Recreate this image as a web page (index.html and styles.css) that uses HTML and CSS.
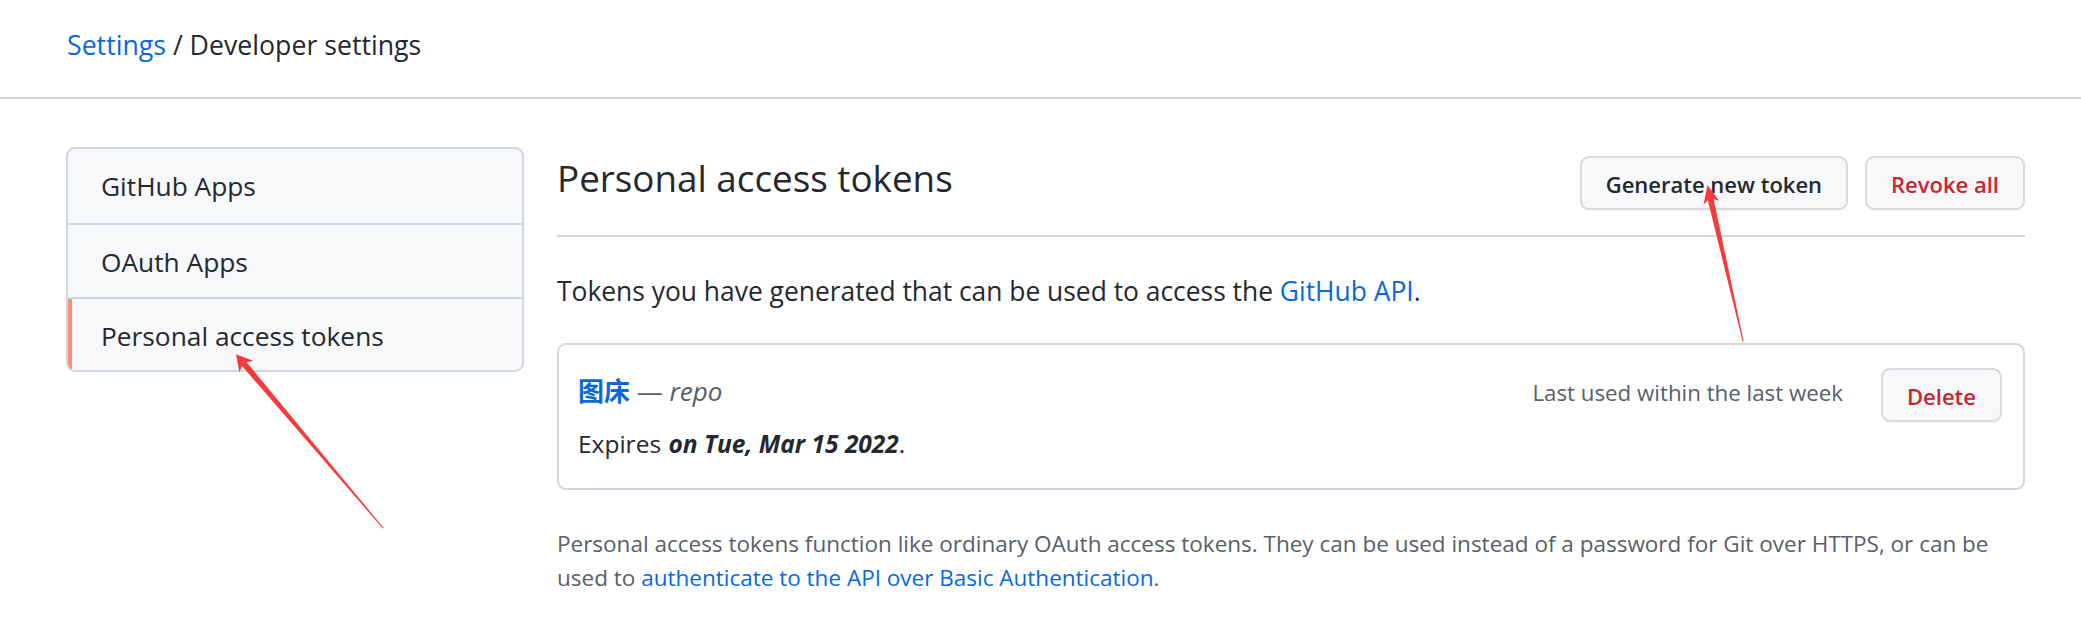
FILE: index.html
```html
<!DOCTYPE html>
<html lang="en">
<head>
<meta charset="utf-8">
<title>Personal access tokens</title>
<link rel="stylesheet" href="styles.css">
</head>
<body>
<header class="header">
  <a class="crumb-link" href="#">Settings</a> / Developer settings
</header>
<div class="layout">
  <nav class="sidebar">
    <a class="side-item" href="#">GitHub Apps</a>
    <a class="side-item" href="#">OAuth Apps</a>
    <a class="side-item active" href="#">Personal access tokens</a>
  </nav>
  <main class="main">
    <div class="subhead">
      <h2 class="title">Personal access tokens</h2>
      <div class="actions">
        <button class="btn">Generate new token</button>
        <button class="btn danger">Revoke all</button>
      </div>
    </div>
    <p class="intro">Tokens you have generated that can be used to access the <a class="link" href="#">GitHub API</a>.</p>
    <div class="token">
      <div class="token-row">
        <div class="token-name"><a class="token-link" href="#">图床</a> <span class="muted">— <em>repo</em></span></div>
        <span class="last-used">Last used within the last week</span>
        <button class="btn danger">Delete</button>
      </div>
      <p class="expires">Expires <strong class="date"><em>on Tue, Mar 15 2022</em></strong>.</p>
    </div>
    <p class="note">Personal access tokens function like ordinary OAuth access tokens. They can be used instead of a password for Git over HTTPS, or can be used to <a class="link" href="#">authenticate to the API over Basic Authentication</a>.</p>
  </main>
</div>
<svg class="arrows" width="2081" height="625" viewBox="0 0 2081 625">
  <polygon fill="#f53b3b" points="236,354.3 253.2,360.7 246.7,362.3 383.7,528 382.9,528.6 242.1,366.1 239.4,372.3"/>
  <polygon fill="#f53b3b" points="1707.4,185 1719.2,200.8 1713.6,198.9 1743.7,341.6 1742.7,341.8 1707.8,200.3 1703.6,204.4"/>
</svg>
</body>
</html>
```

FILE: styles.css
```css
* { box-sizing: border-box; }
html, body { margin: 0; padding: 0; background: #fff; }
body {
  font-family: "Open Sans", "Noto Sans CJK SC", sans-serif;
  color: #24292f;
  width: 2081px;
  height: 625px;
  overflow: hidden;
  position: relative;
}
.header {
  height: 99px;
  padding: 27px 0 0 67px;
  border-bottom: 2px solid #d0d7de;
  font-size: 26.7px;
  line-height: 36px;
}
.crumb-link { color: #0969da; text-decoration: none; }
.layout {
  display: flex;
  gap: 33px;
  padding: 48px 56px 0 66px;
}
.sidebar {
  width: 458px;
  flex: none;
  align-self: flex-start;
  border: 2px solid #d0d7de;
  border-radius: 9px;
  background: #f6f8fa;
  overflow: hidden;
}
.side-item {
  display: block;
  height: 74px;
  padding-top: 1px;
  line-height: 73px;
  padding-left: 33px;
  font-size: 26.3px;
  color: #24292f;
  text-decoration: none;
}
.side-item + .side-item { border-top: 2px solid #d0d7de; }
.side-item.active { height: 73px; box-shadow: inset 4px 0 0 #fd8c73; }
.main { flex: 1; min-width: 0; }
.subhead {
  display: flex;
  align-items: flex-start;
  padding-top: 9px;
  padding-bottom: 25px;
  border-bottom: 2px solid #d0d7de;
}
.title {
  flex: 1;
  margin: 0;
  font-size: 36.8px;
  font-weight: 400;
  line-height: 45px;
}
.actions { display: flex; gap: 17px; }
.btn {
  height: 54px;
  padding: 2px 24px 0;
  line-height: 48px;
  font-family: inherit;
  font-size: 22px;
  font-weight: 600;
  border: 2px solid #d8dadd;
  border-radius: 9px;
  background: #f6f8fa;
  color: #24292f;
  box-shadow: 0 1px 0 rgba(31, 35, 40, 0.04);
}
.btn.danger { color: #cf222e; }
.intro {
  margin: 36px 0 0;
  font-size: 26.4px;
  line-height: 36px;
}
.link { color: #0969da; text-decoration: none; }
.token {
  margin-top: 34px;
  border: 2px solid #d0d7de;
  border-radius: 9px;
  padding: 23px 21px 27px 19px;
}
.token-row { display: flex; align-items: flex-start; }
.token-name {
  flex: 1;
  font-size: 26px;
  line-height: 46px;
}
.token-link { color: #0969da; font-weight: 700; text-decoration: none; }
.muted { color: #57606a; }
.last-used {
  font-size: 22.3px;
  line-height: 49px;
  color: #57606a;
  margin-right: 38px;
}
.expires {
  margin: 5px 0 0;
  font-size: 24.5px;
  line-height: 34px;
}
.date { padding-left: 1px; }
.note {
  margin: 37px 0 0;
  font-size: 22.5px;
  line-height: 33.5px;
  color: #57606a;
}
.arrows { position: absolute; left: 0; top: 0; pointer-events: none; }
```
